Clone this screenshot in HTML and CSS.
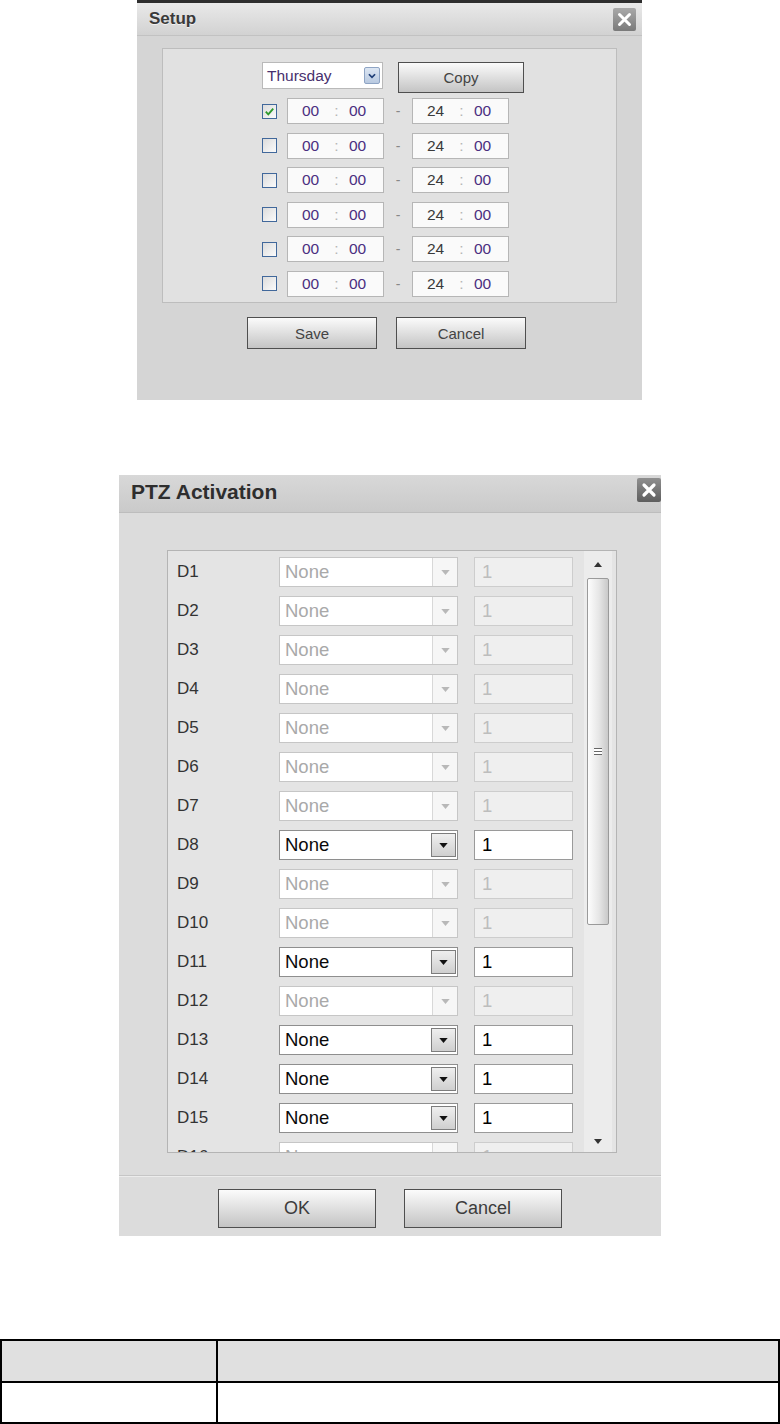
FILE: index.html
```html
<!DOCTYPE html>
<html>
<head>
<meta charset="utf-8">
<title>Setup / PTZ Activation</title>
<link rel="stylesheet" href="styles.css">
</head>
<body>
<div class="setup">
  <div class="setup-title">
    <span class="setup-caption">Setup</span>
    <span class="close small"><svg viewBox="0 0 23 23" width="23" height="23"><path d="M6.5 6.5L16.5 16.5M16.5 6.5L6.5 16.5" stroke="#fff" stroke-width="3" stroke-linecap="round"/></svg></span>
  </div>
  <div class="setup-panel">
    <div class="day-row">
      <div class="day-select"><span class="day-text">Thursday</span><span class="day-arrow"><svg viewBox="0 0 16 16" width="16" height="16"><path d="M4.5 6L8 9.5L11.5 6" fill="none" stroke="#1f3f78" stroke-width="2"/></svg></span></div>
      <div class="btn copy">Copy</div>
    </div>
    <div class="time-row">
      <span class="cbox"><svg viewBox="0 0 14 14" width="13" height="13"><path d="M3 7.2L5.7 10L11 3.8" fill="none" stroke="#2d9a2d" stroke-width="2"/></svg></span>
      <span class="tbox"><span class="tv">00</span><span class="tc">:</span><span class="tv">00</span></span>
      <span class="dash">-</span>
      <span class="tbox"><span class="tv end">24</span><span class="tc">:</span><span class="tv">00</span></span>
    </div>
    <div class="time-row">
      <span class="cbox"></span>
      <span class="tbox"><span class="tv">00</span><span class="tc">:</span><span class="tv">00</span></span>
      <span class="dash">-</span>
      <span class="tbox"><span class="tv end">24</span><span class="tc">:</span><span class="tv">00</span></span>
    </div>
    <div class="time-row">
      <span class="cbox"></span>
      <span class="tbox"><span class="tv">00</span><span class="tc">:</span><span class="tv">00</span></span>
      <span class="dash">-</span>
      <span class="tbox"><span class="tv end">24</span><span class="tc">:</span><span class="tv">00</span></span>
    </div>
    <div class="time-row">
      <span class="cbox"></span>
      <span class="tbox"><span class="tv">00</span><span class="tc">:</span><span class="tv">00</span></span>
      <span class="dash">-</span>
      <span class="tbox"><span class="tv end">24</span><span class="tc">:</span><span class="tv">00</span></span>
    </div>
    <div class="time-row">
      <span class="cbox"></span>
      <span class="tbox"><span class="tv">00</span><span class="tc">:</span><span class="tv">00</span></span>
      <span class="dash">-</span>
      <span class="tbox"><span class="tv end">24</span><span class="tc">:</span><span class="tv">00</span></span>
    </div>
    <div class="time-row">
      <span class="cbox"></span>
      <span class="tbox"><span class="tv">00</span><span class="tc">:</span><span class="tv">00</span></span>
      <span class="dash">-</span>
      <span class="tbox"><span class="tv end">24</span><span class="tc">:</span><span class="tv">00</span></span>
    </div>
  </div>
  <div class="setup-actions">
    <div class="btn act">Save</div>
    <div class="btn act">Cancel</div>
  </div>
</div>

<div class="ptz">
  <div class="ptz-title">
    <span class="ptz-caption">PTZ Activation</span>
    <span class="close big"><svg viewBox="0 0 24 24" width="24" height="24"><path d="M7 7L17 17M17 7L7 17" stroke="#fff" stroke-width="3.2" stroke-linecap="round"/></svg></span>
  </div>
  <div class="ptz-panel">
    <div class="ptz-list">
      <div class="prow off"><span class="plabel">D1</span><span class="psel"><span class="pstext">None</span><span class="pdrop"><svg viewBox="0 0 10 6" width="9" height="5"><path d="M0 0H10L5 6Z"/></svg></span></span><span class="pinput">1</span></div>
      <div class="prow off"><span class="plabel">D2</span><span class="psel"><span class="pstext">None</span><span class="pdrop"><svg viewBox="0 0 10 6" width="9" height="5"><path d="M0 0H10L5 6Z"/></svg></span></span><span class="pinput">1</span></div>
      <div class="prow off"><span class="plabel">D3</span><span class="psel"><span class="pstext">None</span><span class="pdrop"><svg viewBox="0 0 10 6" width="9" height="5"><path d="M0 0H10L5 6Z"/></svg></span></span><span class="pinput">1</span></div>
      <div class="prow off"><span class="plabel">D4</span><span class="psel"><span class="pstext">None</span><span class="pdrop"><svg viewBox="0 0 10 6" width="9" height="5"><path d="M0 0H10L5 6Z"/></svg></span></span><span class="pinput">1</span></div>
      <div class="prow off"><span class="plabel">D5</span><span class="psel"><span class="pstext">None</span><span class="pdrop"><svg viewBox="0 0 10 6" width="9" height="5"><path d="M0 0H10L5 6Z"/></svg></span></span><span class="pinput">1</span></div>
      <div class="prow off"><span class="plabel">D6</span><span class="psel"><span class="pstext">None</span><span class="pdrop"><svg viewBox="0 0 10 6" width="9" height="5"><path d="M0 0H10L5 6Z"/></svg></span></span><span class="pinput">1</span></div>
      <div class="prow off"><span class="plabel">D7</span><span class="psel"><span class="pstext">None</span><span class="pdrop"><svg viewBox="0 0 10 6" width="9" height="5"><path d="M0 0H10L5 6Z"/></svg></span></span><span class="pinput">1</span></div>
      <div class="prow on"><span class="plabel">D8</span><span class="psel"><span class="pstext">None</span><span class="pdrop"><svg viewBox="0 0 10 6" width="9" height="5"><path d="M0 0H10L5 6Z"/></svg></span></span><span class="pinput">1</span></div>
      <div class="prow off"><span class="plabel">D9</span><span class="psel"><span class="pstext">None</span><span class="pdrop"><svg viewBox="0 0 10 6" width="9" height="5"><path d="M0 0H10L5 6Z"/></svg></span></span><span class="pinput">1</span></div>
      <div class="prow off"><span class="plabel">D10</span><span class="psel"><span class="pstext">None</span><span class="pdrop"><svg viewBox="0 0 10 6" width="9" height="5"><path d="M0 0H10L5 6Z"/></svg></span></span><span class="pinput">1</span></div>
      <div class="prow on"><span class="plabel">D11</span><span class="psel"><span class="pstext">None</span><span class="pdrop"><svg viewBox="0 0 10 6" width="9" height="5"><path d="M0 0H10L5 6Z"/></svg></span></span><span class="pinput">1</span></div>
      <div class="prow off"><span class="plabel">D12</span><span class="psel"><span class="pstext">None</span><span class="pdrop"><svg viewBox="0 0 10 6" width="9" height="5"><path d="M0 0H10L5 6Z"/></svg></span></span><span class="pinput">1</span></div>
      <div class="prow on"><span class="plabel">D13</span><span class="psel"><span class="pstext">None</span><span class="pdrop"><svg viewBox="0 0 10 6" width="9" height="5"><path d="M0 0H10L5 6Z"/></svg></span></span><span class="pinput">1</span></div>
      <div class="prow on"><span class="plabel">D14</span><span class="psel"><span class="pstext">None</span><span class="pdrop"><svg viewBox="0 0 10 6" width="9" height="5"><path d="M0 0H10L5 6Z"/></svg></span></span><span class="pinput">1</span></div>
      <div class="prow on"><span class="plabel">D15</span><span class="psel"><span class="pstext">None</span><span class="pdrop"><svg viewBox="0 0 10 6" width="9" height="5"><path d="M0 0H10L5 6Z"/></svg></span></span><span class="pinput">1</span></div>
      <div class="prow off"><span class="plabel">D16</span><span class="psel"><span class="pstext">None</span><span class="pdrop"><svg viewBox="0 0 10 6" width="9" height="5"><path d="M0 0H10L5 6Z"/></svg></span></span><span class="pinput">1</span></div>
    </div>
    <div class="scrollbar">
      <span class="sarrow"><svg viewBox="0 0 10 6" width="8" height="5"><path d="M0 6H10L5 0Z"/></svg></span>
      <span class="thumb"><span class="grip"></span></span>
      <span class="sspace"></span>
      <span class="sarrow"><svg viewBox="0 0 10 6" width="8" height="5"><path d="M0 0H10L5 6Z"/></svg></span>
    </div>
  </div>
  <div class="ptz-footer">
    <div class="btn big-btn">OK</div>
    <div class="btn big-btn">Cancel</div>
  </div>
</div>

<table class="spec">
  <tr class="spec-head"><th class="c1"></th><th class="c2"></th></tr>
  <tr class="spec-row"><td class="c1"></td><td class="c2"></td></tr>
</table>
</body>
</html>
```

FILE: styles.css
```css
* { box-sizing: border-box; }
html, body { margin: 0; padding: 0; background: #fff; }
body {
  font-family: "Liberation Sans", Arial, sans-serif;
  width: 780px;
  height: 1424px;
  overflow: hidden;
}

/* ---------- Setup dialog ---------- */
.setup {
  margin-left: 137px;
  width: 505px;
  height: 400px;
  background: #d5d5d5;
  border-top: 3px solid #2e2e2e;
  display: flex;
  flex-direction: column;
}
.setup-title {
  height: 33px;
  display: flex;
  align-items: center;
  justify-content: space-between;
  padding: 0 6px 0 12px;
  background: linear-gradient(#e9e9e9, #d2d2d2);
  border-bottom: 1px solid #c2c2c2;
}
.setup-caption {
  font-size: 17px;
  font-weight: bold;
  color: #3a3a3a;
  text-shadow: 0 1px 0 #f2f2f2;
}
.close {
  display: flex;
  border-radius: 2px;
  background: linear-gradient(#a9a9a9, #7a7a7a);
}
.close.small { width: 23px; height: 23px; margin-top: 1px; }
.close.big { width: 24px; height: 24px; background: linear-gradient(#8f8f8f, #5e5e5e); }

.setup-panel {
  margin: 12px 25px 0 25px;
  height: 255px;
  border: 1px solid #bdbdbd;
  background: #e1e1e1;
  padding: 13px 0 0 99px;
  display: flex;
  flex-direction: column;
  gap: 8.5px;
}
.day-row {
  display: flex;
  align-items: flex-start;
  gap: 15px;
  margin-bottom: -3.5px;
}
.day-select {
  width: 121px;
  height: 27px;
  background: #fff;
  border: 1px solid #b9b9b9;
  display: flex;
  align-items: center;
  justify-content: space-between;
  padding: 0 2px 0 4px;
}
.day-text { font-size: 15.5px; color: #47306e; }
.day-arrow {
  width: 16px;
  height: 17px;
  display: flex;
  align-items: center;
  justify-content: center;
  background: linear-gradient(#dce6f3, #b8c9e0);
  border: 1px solid #8ea4c4;
  border-radius: 2px;
}
.btn {
  display: flex;
  align-items: center;
  justify-content: center;
  background: linear-gradient(#fbfbfb 0%, #e2e2e2 45%, #c4c4c4 100%);
  border: 1px solid #4f4f4f;
  color: #444;
}
.copy { width: 126px; height: 31px; font-size: 15px; }

.time-row {
  display: flex;
  align-items: center;
  height: 26px;
}
.cbox {
  width: 15px;
  height: 15px;
  border: 1px solid #41689b;
  background: linear-gradient(135deg, #dcdcdc, #fbfbfb);
  display: flex;
  align-items: center;
  justify-content: center;
  margin-right: 10px;
}
.tbox {
  width: 97px;
  height: 26px;
  background: #fafafa;
  border: 1px solid #b6b6b6;
  display: flex;
  align-items: center;
  padding-left: 14px;
  font-size: 15.5px;
}
.tv { color: #4a2f80; width: 22px; }
.tv.end { color: #3a3a3a; }
.tc { color: #b5b5b5; width: 25px; text-align: center; }
.dash {
  width: 28px;
  text-align: center;
  color: #888;
  font-size: 14px;
}

.setup-actions {
  margin-top: 14px;
  display: flex;
  justify-content: center;
  gap: 19px;
  padding-right: 6px;
}
.act { width: 130px; height: 32px; font-size: 15px; }

/* ---------- PTZ dialog ---------- */
.ptz {
  margin: 75px 0 0 119px;
  width: 542px;
  height: 761px;
  background: #dcdcdc;
  display: flex;
  flex-direction: column;
}
.ptz-title {
  height: 38px;
  display: flex;
  align-items: flex-start;
  justify-content: space-between;
  padding: 3px 0 0 12px;
  background: linear-gradient(#d8d8d8, #cacaca);
  border-bottom: 1px solid #bdbdbd;
}
.ptz-caption {
  font-size: 21px;
  font-weight: bold;
  color: #2e2e2e;
  margin-top: 2px;
}
.ptz-panel {
  margin: 37px 44px 0 48px;
  height: 603px;
  border: 1px solid #b4b4b4;
  background: #e4e4e4;
  display: flex;
  overflow: hidden;
}
.ptz-list {
  flex: 1;
  padding: 6px 0 0 9px;
  display: flex;
  flex-direction: column;
  gap: 9px;
}
.prow {
  display: flex;
  align-items: center;
  height: 30px;
  flex-shrink: 0;
}
.plabel {
  width: 102px;
  font-size: 17px;
  color: #333;
}
.psel {
  width: 179px;
  height: 30px;
  background: #fff;
  display: flex;
  align-items: stretch;
  margin-right: 16px;
}
.pstext {
  flex: 1;
  display: flex;
  align-items: center;
  padding-left: 5px;
  font-size: 18.5px;
}
.pdrop {
  width: 25px;
  display: flex;
  align-items: center;
  justify-content: center;
}
.pinput {
  width: 99px;
  height: 30px;
  display: flex;
  align-items: center;
  padding-left: 7px;
  font-size: 18.5px;
}
.off .psel { border: 1px solid #c6c6c6; }
.off .pstext { color: #a9a9a9; }
.off .pdrop { border-left: 1px solid #d8d8d8; background: #f6f6f6; }
.off .pdrop svg { fill: #b8b8b8; }
.off .pinput { background: #efefef; border: 1px solid #cdcdcd; color: #bdbdbd; }
.on .psel { border: 1px solid #8e8e8e; }
.on .pstext { color: #0a0a0a; }
.on .pdrop { margin: 2px 1px 2px 0; border: 1px solid #7d7d7d; background: linear-gradient(#efefef, #cfcfcf); }
.on .pdrop svg { fill: #111; }
.on .pinput { background: #fff; border: 1px solid #9a9a9a; color: #000; }

.scrollbar {
  width: 28px;
  margin-right: 4px;
  background: #ececec;
  display: flex;
  flex-direction: column;
  align-items: center;
  padding: 6px 0 4px;
}
.sarrow {
  height: 14px;
  display: flex;
  align-items: center;
  justify-content: center;
  fill: #333;
}
.thumb {
  margin-top: 7px;
  width: 22px;
  height: 347px;
  border: 1px solid #9a9a9a;
  border-radius: 2px;
  background: linear-gradient(90deg, #fdfdfd, #e6e6e6 55%, #c9c9c9);
  display: flex;
  align-items: center;
  justify-content: center;
}
.grip {
  width: 8px;
  height: 7px;
  border-top: 1px solid #666;
  border-bottom: 1px solid #666;
  background: linear-gradient(#fff 0 2px, #666 2px 3px, #fff 3px);
}
.sspace { flex: 1; }

.ptz-footer {
  margin-top: 22px;
  border-top: 1px solid #c6c6c6;
  box-shadow: inset 0 1px 0 #ececec;
  padding-top: 13px;
  display: flex;
  justify-content: center;
  gap: 28px;
}
.big-btn { width: 158px; height: 39px; font-size: 18px; color: #3c3c3c; }

/* ---------- table ---------- */
.spec {
  margin-top: 103px;
  width: 780px;
  border-collapse: collapse;
  border: 2px solid #000;
}
.spec th, .spec td {
  border: 2px solid #000;
  padding: 0;
}
.spec-head { height: 42px; background: #e0e0e0; }
.spec-row { height: 41px; background: #fff; }
.spec .c1 { width: 216px; }
```
